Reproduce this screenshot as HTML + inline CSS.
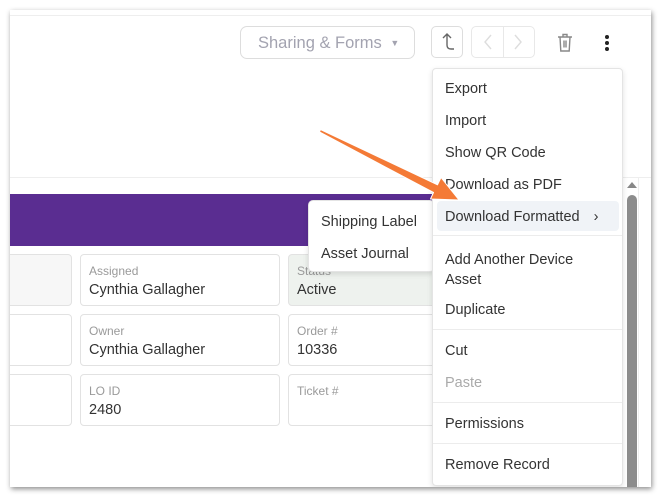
<!DOCTYPE html>
<html><head><style>
*{margin:0;padding:0;box-sizing:border-box}
body{width:661px;height:497px;background:#fff;position:relative;overflow:hidden;font-family:"Liberation Sans",sans-serif;color:#333}
.frame{position:absolute;left:10px;top:10px;width:641px;height:477px;background:#fff;box-shadow:1px 2px 5px rgba(0,0,0,.45);overflow:hidden}
.abs{position:absolute}
.card{position:absolute;border:1px solid #e2e2e2;border-radius:4px;background:#fff;height:52px}
.card .l{position:absolute;left:8px;top:9px;font-size:12px;color:#9a9a9a}
.card .v{position:absolute;left:8px;top:27px;font-size:14.5px;color:#333}
.menu{position:absolute;left:422px;top:58px;width:191px;height:418px;background:#fff;border:1px solid #e4e4e4;border-radius:4px;box-shadow:0 2px 6px rgba(0,0,0,.12)}
.mi{position:absolute;left:12px;font-size:14.5px;color:#333}
.sep{position:absolute;left:0;right:0;height:1px;background:#ececec}
</style></head><body>
<div class="frame">
 <div class="abs" style="left:0;top:5px;width:641px;height:1px;background:#eee"></div>
 <div class="abs" style="left:0;top:167px;width:641px;height:1px;background:#eee"></div>
 <div class="abs" style="left:0;top:184px;width:430px;height:52px;background:#5a2d91"></div>
 <div class="abs" style="left:230px;top:16px;width:175px;height:33px;border:1px solid #ddd;border-radius:7px;font-size:16.5px;color:#a3a3b0;padding:7px 0 0 17px">Sharing &amp; Forms <span style="font-size:9px;position:relative;top:-2px;margin-left:4px">▼</span></div>
 <div class="abs" style="left:421px;top:16px;width:32px;height:32px;border:1px solid #ddd;border-radius:5px">
  <svg width="30" height="30" viewBox="0 0 30 30"><path d="M11 11 L15 7 L19 11 M15 7 V18 Q15 22 19 22 H22" fill="none" stroke="#666" stroke-width="1.4"/></svg></div>
 <div class="abs" style="left:461px;top:16px;width:64px;height:32px;border:1px solid #e8e8e8;border-radius:5px">
  <div class="abs" style="left:31px;top:0;width:1px;height:30px;background:#e8e8e8"></div>
  <svg class="abs" style="left:0;top:0" width="62" height="30"><path d="M19 8 L13 15 L19 22 M43 8 L49 15 L43 22" fill="none" stroke="#ddd" stroke-width="1.4"/></svg></div>
 <svg class="abs" style="left:545px;top:22px" width="22" height="22" viewBox="0 0 22 22"><path d="M3 5H17M8 5V2.5H12V5M5 5L5.8 19H14.2L15 5M9 8.5V15.5M11 8.5V15.5" fill="none" stroke="#888" stroke-width="1.4"/></svg>
 <div class="abs" style="left:595px;top:25px;width:4px;height:4px;border-radius:2px;background:#222;box-shadow:0 6px 0 #222,0 12px 0 #222"></div>
 <div class="card" style="left:-10px;top:244px;width:72px;background:#f7f7f7"></div>
 <div class="card" style="left:70px;top:244px;width:200px"><div class="l">Assigned</div><div class="v">Cynthia Gallagher</div></div>
 <div class="card" style="left:278px;top:244px;width:160px;background:#eef2ee"><div class="l">Status</div><div class="v">Active</div></div>
 <div class="card" style="left:-10px;top:304px;width:72px"></div>
 <div class="card" style="left:70px;top:304px;width:200px"><div class="l">Owner</div><div class="v">Cynthia Gallagher</div></div>
 <div class="card" style="left:278px;top:304px;width:160px"><div class="l">Order #</div><div class="v">10336</div></div>
 <div class="card" style="left:-10px;top:364px;width:72px"></div>
 <div class="card" style="left:70px;top:364px;width:200px"><div class="l">LO ID</div><div class="v">2480</div></div>
 <div class="card" style="left:278px;top:364px;width:160px"><div class="l">Ticket #</div></div>
 <div class="abs" style="left:628px;top:168px;width:1px;height:309px;background:#eee"></div>
 <div class="abs" style="left:617px;top:172px;width:0;height:0;border-left:5px solid transparent;border-right:5px solid transparent;border-bottom:6px solid #888"></div>
 <div class="abs" style="left:617px;top:185px;width:10px;height:300px;border-radius:5px;background:#8c8c8c"></div>
 <div class="abs" style="left:298px;top:190px;width:127px;height:72px;background:#fff;border:1px solid #e4e4e4;border-radius:5px;box-shadow:0 2px 6px rgba(0,0,0,.12)">
  <div class="mi" style="top:13px">Shipping Label</div><div class="mi" style="top:45px">Asset Journal</div></div>
 <div class="menu">
  <div class="mi" style="top:12px">Export</div>
  <div class="mi" style="top:44px">Import</div>
  <div class="mi" style="top:76px">Show QR Code</div>
  <div class="mi" style="top:108px">Download as PDF</div>
  <div class="abs" style="left:4px;top:132px;width:182px;height:30px;background:#f0f3f7;border-radius:4px"></div>
  <div class="mi" style="top:140px">Download Formatted <span style="margin-left:10px">›</span></div>
  <div class="sep" style="top:166px"></div>
  <div class="mi" style="top:181px;line-height:20px">Add Another Device<br>Asset</div>
  <div class="mi" style="top:233px">Duplicate</div>
  <div class="sep" style="top:260px"></div>
  <div class="mi" style="top:274px">Cut</div>
  <div class="mi" style="top:306px;color:#aaa">Paste</div>
  <div class="sep" style="top:333px"></div>
  <div class="mi" style="top:347px">Permissions</div>
  <div class="sep" style="top:374px"></div>
  <div class="mi" style="top:388px">Remove Record</div>
 </div>
</div>
<svg class="abs" style="left:0;top:0" width="661" height="497">
 <polygon points="320.5,129.5 437.5,184.8 441,177.5 459,200 430.5,199 433.5,192.5 319.5,132" fill="#f47a36" stroke="#fff" stroke-width="1" stroke-linejoin="round"/>
</svg>
</body></html>
